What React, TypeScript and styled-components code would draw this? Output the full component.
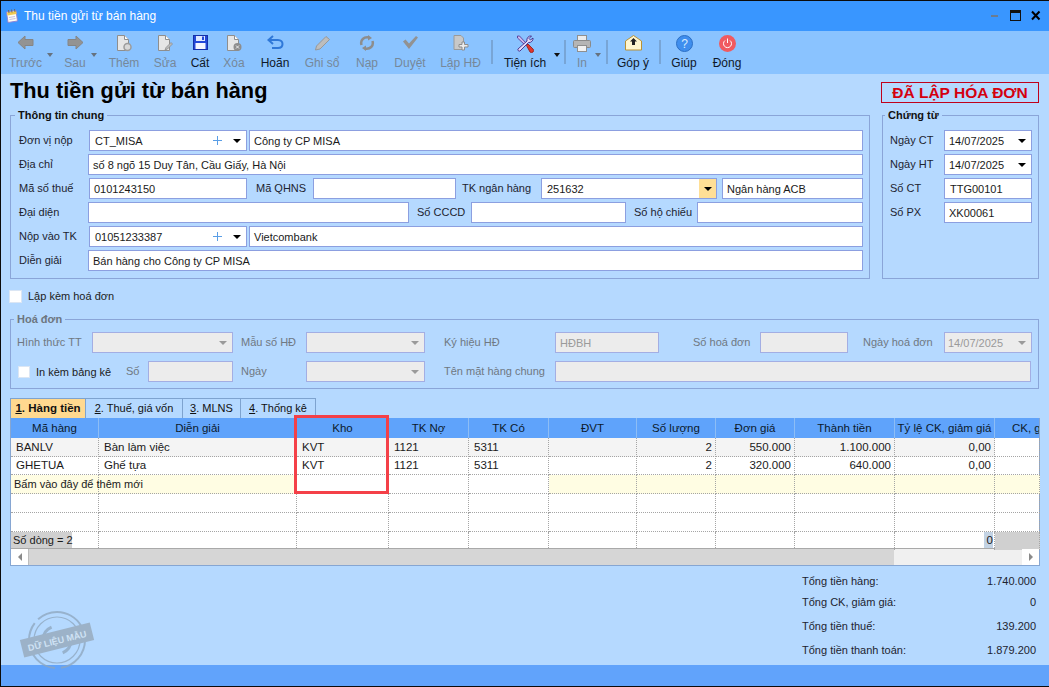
import React from "react";
import styled, { createGlobalStyle } from "styled-components";

const GlobalStyle = createGlobalStyle`
html, body {
  margin: 0;
  padding: 0;
  background: #b5d9ff;
}
* {
  box-sizing: border-box;
}
`;

const Frame = styled.div`
  position: relative;
  width: 1049px;
  height: 687px;
  display: flex;
  flex-direction: column;
  overflow: hidden;
  border: 1px solid #0b0b0b;
  border-right: 0;
  font: 11px "Liberation Sans", Arial, sans-serif;
  color: #1c1c1c;
`;

const TitleBar = styled.div`
  height: 30px;
  flex: none;
  display: flex;
  align-items: center;
  padding: 0 8px 0 4px;
  background: #3996ff;
  color: #fff;
  font-size: 12px;
`;

const TitleText = styled.div`
  margin-left: 5px;
  flex: 1;
`;

const WinControls = styled.div`
  display: flex;
  align-items: center;
  gap: 10px;
  margin-top: -1px;
`;

const Toolbar = styled.div`
  height: 43px;
  flex: none;
  display: flex;
  padding-top: 4px;
  background: #8ac3ff;
  font-size: 12px;
`;

const ToolButton = styled.div<{ $w: number; $off?: boolean }>`
  position: relative;
  width: ${(p) => p.$w}px;
  flex: none;
  display: flex;
  flex-direction: column;
  align-items: center;
  color: ${(p) => (p.$off ? "#76889a" : "#101828")};
`;

const ToolIcon = styled.div`
  height: 18px;
  display: flex;
  justify-content: center;
`;

const ToolLabel = styled.div`
  margin-top: 3px;
  line-height: 14px;
  white-space: nowrap;
`;

const SmallCaret = styled.span<{ $right: number; $off?: boolean }>`
  position: absolute;
  top: 18px;
  right: ${(p) => p.$right}px;
  border-left: 3.5px solid transparent;
  border-right: 3.5px solid transparent;
  border-top: 4px solid ${(p) => (p.$off ? "#66727f" : "#111")};
`;

const ToolSep = styled.div<{ $ml: number }>`
  width: 2px;
  height: 24px;
  margin: 5px 0 0 ${(p) => p.$ml}px;
  flex: none;
  background: #78a5d6;
`;

const Content = styled.div`
  flex: 1;
  min-height: 0;
  padding: 0 0 0 9px;
  background: #b5d9ff;
`;

const HeadRow = styled.div`
  height: 34px;
  display: flex;
  justify-content: space-between;
  width: 1030px;
`;

const Heading = styled.h1`
  margin: 3px 0 0;
  font-size: 21.75px;
  line-height: 28px;
  font-weight: 700;
  color: #000;
`;

const Badge = styled.div`
  width: 158px;
  height: 21px;
  margin: 8px 1px 0 0;
  border: 1px solid #c0001a;
  color: #d4000f;
  font-size: 15.5px;
  font-weight: 700;
  line-height: 19px;
  text-align: center;
  white-space: nowrap;
`;

const GroupRow = styled.div`
  display: flex;
  gap: 12px;
  width: 1030px;
`;

const Group = styled.fieldset<{ $w: number; $h: number; $pt: number; $pl: number }>`
  width: ${(p) => p.$w}px;
  height: ${(p) => p.$h}px;
  margin: 0;
  padding: ${(p) => p.$pt}px 6px 0 ${(p) => p.$pl}px;
  border: 1px solid #8aa5d8;
  min-width: 0;
`;

const GroupTitle = styled.legend<{ $off?: boolean; $ml: number }>`
  margin-left: ${(p) => p.$ml}px;
  padding: 0 3px;
  font-weight: 700;
  line-height: 14px;
  color: ${(p) => (p.$off ? "#6d7680" : "#111")};
`;

const Rows = styled.div<{ $gap: number }>`
  display: flex;
  flex-direction: column;
  gap: ${(p) => p.$gap}px;
`;

const Row = styled.div`
  display: flex;
  height: 21px;
  align-items: stretch;
`;

const Label = styled.div<{ $w: number; $pl?: number; $off?: boolean }>`
  width: ${(p) => p.$w}px;
  flex: none;
  padding-left: ${(p) => p.$pl ?? 0}px;
  line-height: 21px;
  white-space: nowrap;
  color: ${(p) => (p.$off ? "#6f7882" : "#1d2430")};
`;

const Field = styled.div<{ $w?: number; $off?: boolean; $ml?: number; $pl?: number }>`
  ${(p) => (p.$w ? `width: ${p.$w}px; flex: none;` : "flex: 1; min-width: 0;")}
  margin-left: ${(p) => p.$ml ?? 0}px;
  display: flex;
  align-items: center;
  padding-left: ${(p) => p.$pl ?? 4}px;
  border: 1px solid ${(p) => (p.$off ? "#a3aee3" : "#8c9fe0")};
  background: ${(p) => (p.$off ? "#ececec" : "#fff")};
  color: ${(p) => (p.$off ? "#9a9a9a" : "#1a1a1a")};
  white-space: nowrap;
`;

const FieldText = styled.span`
  flex: 1;
`;

const Caret = styled.span<{ $off?: boolean }>`
  width: 0;
  height: 0;
  margin-right: 5px;
  flex: none;
  border-left: 4px solid transparent;
  border-right: 4px solid transparent;
  border-top: 4px solid ${(p) => (p.$off ? "#9a9a9a" : "#000")};
`;

const CaretButton = styled.span`
  align-self: stretch;
  width: 17px;
  display: flex;
  align-items: center;
  justify-content: center;
  background: #ffdf96;
  ${Caret} {
    margin: 0;
  }
`;

const PlusMark = styled.span`
  position: relative;
  width: 9px;
  height: 9px;
  margin-right: 11px;
  flex: none;
  &::before,
  &::after {
    content: "";
    position: absolute;
    background: #5a9ee6;
  }
  &::before {
    left: 4px;
    top: 0;
    width: 1px;
    height: 9px;
  }
  &::after {
    left: 0;
    top: 4px;
    width: 9px;
    height: 1px;
  }
`;

const CheckLine = styled.div`
  height: 14px;
  margin: 10px 0 9px -1px;
  display: flex;
  align-items: center;
  gap: 6px;
  line-height: 14px;
`;

const CheckBox = styled.span<{ $size: number }>`
  width: ${(p) => p.$size}px;
  height: ${(p) => p.$size}px;
  flex: none;
  background: #fff;
  border: 1px solid #dbe6f4;
`;

const InlineCheck = styled.div`
  width: 109px;
  flex: none;
  display: flex;
  align-items: center;
  gap: 6px;
  padding-left: 1px;
  white-space: nowrap;
`;

const Tabs = styled.div`
  height: 20px;
  margin-top: 9px;
  display: flex;
`;

const Tab = styled.div<{ $w: number; $active?: boolean }>`
  width: ${(p) => p.$w}px;
  border: 1px solid #7ea3cf;
  border-left-width: ${(p) => (p.$active ? 1 : 0)}px;
  border-bottom: 0;
  background: ${(p) => (p.$active ? "#ffd98f" : "#b5d9ff")};
  font-weight: ${(p) => (p.$active ? 700 : 400)};
  font-size: ${(p) => (p.$active ? 11.5 : 11)}px;
  color: #111;
  line-height: 18px;
  text-align: center;
  white-space: nowrap;
`;

const Grid = styled.div`
  position: relative;
  width: 1030px;
  border: 1px solid #86a6d2;
  border-top: 0;
  background: #fff;
  font-size: 11.5px;
`;

const GRID_COLUMNS = "88px 198px 92px 80px 80px 88px 79px 79px 100px 100px 45px";

const HeadCells = styled.div`
  display: grid;
  grid-template-columns: ${GRID_COLUMNS};
  height: 20px;
  background: #5fa3fb;
  overflow: hidden;
`;

const HeadCell = styled.div<{ $clip?: boolean }>`
  border-right: 1px solid #8dbdf5;
  line-height: 20px;
  white-space: nowrap;
  overflow: hidden;
  color: #0c1a2c;
  text-align: ${(p) => (p.$clip ? "left" : "center")};
  padding-left: ${(p) => (p.$clip ? 17 : 0)}px;
`;

const BodyRow = styled.div<{ $h: number }>`
  display: grid;
  grid-template-columns: ${GRID_COLUMNS};
  height: ${(p) => p.$h}px;
`;

const Cell = styled.div<{ $bg?: string; $right?: boolean; $foot?: boolean }>`
  padding: 0 ${(p) => (p.$right ? 3 : 4)}px 0 5px;
  border-right: 1px dotted #a5a5a5;
  border-bottom: ${(p) => (p.$foot ? "0" : "1px dotted #a5a5a5")};
  background: ${(p) => p.$bg ?? "transparent"};
  line-height: 18px;
  white-space: nowrap;
  text-align: ${(p) => (p.$right ? "right" : "left")};
  color: #1a1a1a;
`;

const AddHint = styled.span`
  position: relative;
  margin-left: -2px;
  font-size: 11px;
`;

const FootCount = styled.span`
  display: inline-block;
  margin-left: -5px;
  padding-left: 2px;
  width: 61px;
  background: #d0d0d0;
  font-size: 11px;
  line-height: 16px;
  vertical-align: top;
`;

const FootZero = styled.span`
  display: inline-block;
  width: 9px;
  margin-right: -2px;
  background: #c3d3e4;
  line-height: 16px;
  vertical-align: top;
`;

const ScrollBar = styled.div`
  height: 17px;
  display: flex;
  border-top: 1px solid #a9a9a9;
  background: #f0f0f0;
`;

const ScrollBtn = styled.div`
  width: 17px;
  flex: none;
  display: flex;
  align-items: center;
  justify-content: center;
  background: #fff;
`;

const ScrollArrow = styled.span<{ $dir: "left" | "right" }>`
  border-top: 4px solid transparent;
  border-bottom: 4px solid transparent;
  ${(p) => (p.$dir === "left" ? "border-right" : "border-left")}: 4px solid #8a8a8a;
`;

const ScrollThumb = styled.div`
  width: 866px;
  flex: none;
  background: #d6d6d6;
  border-left: 1px solid #bdbdbd;
`;

const ScrollRest = styled.div`
  flex: 1;
`;

const Highlight = styled.div`
  position: absolute;
  left: 283px;
  top: -3px;
  width: 95px;
  height: 79px;
  border: 3px solid #f44048;
  pointer-events: none;
`;

const Totals = styled.div`
  width: 234px;
  margin: 5px 0 0 792px;
`;

const TotalRow = styled.div<{ $mt: number }>`
  height: 20px;
  margin-top: ${(p) => p.$mt}px;
  display: flex;
  justify-content: space-between;
  line-height: 20px;
  color: #1d2430;
`;

const StatusBar = styled.div`
  height: 21px;
  flex: none;
  background: #61a3fb;
`;

const Stamp = styled.svg`
  position: absolute;
  left: 18px;
  top: 607px;
  pointer-events: none;
`;

function WindowIcon() {
  return (
    <svg width="14" height="15" viewBox="0 0 14 15">
      <path d="M1.500 3 L11 1.500 L12.500 12 L3 13.500 Z" fill="#fffdf0" stroke="#8f86d6" />
      <path d="M2 3.500 L11 2 L11.500 5 L2.500 6.500 Z" fill="#f0c850" />
      <path d="M3.500 1 L4 4 M6.500 .5 L7 3.500 M9.500 0 L10 3" stroke="#6a6a6a" />
      <path d="M4 8.500 L10 7.500 M4.500 10.500 L10.500 9.500" stroke="#c2bde6" />
    </svg>
  );
}

function ArrowIcon({ dir }: { dir: "left" | "right" }) {
  const d = dir === "left" ? "M8 1 L1 7.500 L8 14 V10.500 H16 V4.500 H8 Z" : "M9 1 L16 7.500 L9 14 V10.500 H1 V4.500 H9 Z";
  return (
    <svg width="17" height="15" viewBox="0 0 17 15">
      <path d={d} fill="#939393" stroke="#858585" />
    </svg>
  );
}

function DocIcon({ children }: { children?: React.ReactNode }) {
  return (
    <svg width="16" height="17" viewBox="0 0 16 17">
      <path d="M1.500 .5 H8.500 L12.500 4.500 V15.500 H1.500 Z" fill="#e6e6e6" stroke="#8e8e8e" />
      <path d="M8.500 .5 V4.500 H12.500" fill="#fff" stroke="#8e8e8e" />
      {children}
    </svg>
  );
}

function SaveIcon() {
  return (
    <svg width="15" height="15" viewBox="0 0 15 15">
      <rect x=".5" y=".5" width="14" height="14" fill="#2348d8" stroke="#1530a8" />
      <rect x="3" y="1" width="9" height="5" fill="#dfe8ff" />
      <rect x="9" y="1.500" width="2" height="3.500" fill="#2348d8" />
      <rect x="2.500" y="8" width="10" height="6" fill="#f4f6ff" />
    </svg>
  );
}

function UndoIcon() {
  return (
    <svg width="17" height="15" viewBox="0 0 17 15" fill="none">
      <path d="M2 5 H11 C14 5 15.500 7 15.500 9 C15.500 11.500 14 13 11 13 H5" stroke="#2f78d8" strokeWidth="2" />
      <path d="M6 1 L1.500 5 L6 9" stroke="#2f78d8" strokeWidth="2" />
    </svg>
  );
}

function PencilIcon() {
  return (
    <svg width="17" height="16" viewBox="0 0 17 16">
      <path d="M1.500 15 L2.500 11 L12 1.500 L15.500 4.500 L6 14 Z" fill="#bdbdbd" stroke="#989898" />
    </svg>
  );
}

function ReloadIcon() {
  return (
    <svg width="16" height="16" viewBox="0 0 16 16" fill="none" stroke="#8d8d8d" strokeWidth="2.500">
      <path d="M2.500 10 C1 5 5 1.500 10 2.500" />
      <path d="M13.500 6 C15 11 11 14.500 6 13.500" />
      <path d="M9 0 L13 3 L9 5.500 Z M7 16 L3 13 L7 10.500 Z" fill="#8d8d8d" stroke="none" />
    </svg>
  );
}

function CheckIcon() {
  return (
    <svg width="17" height="15" viewBox="0 0 17 15">
      <path d="M1 6.500 L3.500 4.500 L7 8.500 L14 1 L16 2.500 L7 14 Z" fill="#929292" />
    </svg>
  );
}

function InvoiceIcon() {
  return (
    <svg width="16" height="16" viewBox="0 0 16 16">
      <path d="M1 .5 H8 L10.500 3 V14.500 H1 Z" fill="#c8c8c8" stroke="#9a9a9a" />
      <path d="M9 7 H11.500 V9.500 H15 V12 H11.500 V15 H9 V12 H6 V9.500 H9 Z" fill="#ececec" stroke="#8c8c8c" />
    </svg>
  );
}

function ToolsIcon() {
  return (
    <svg width="18" height="18" viewBox="0 0 18 18">
      <path d="M1.500 1 L3.500 1 L10 8 L8.500 9.500 L1.500 3 Z" fill="#cbbcec" stroke="#4b2c8f" strokeWidth=".8" />
      <path d="M15.500 1 A4 4 0 0 0 11 6 L2 14 A1.500 1.500 0 0 0 4 16 L12.500 7.500 A4 4 0 0 0 17 3 L14.500 5 L13 3.500 Z" fill="#e5dcf8" stroke="#3d2786" strokeWidth=".9" />
      <path d="M10.500 10.500 L12 9 L17 14 A2 2 0 0 1 14 17 Z" fill="#e0362c" stroke="#8d1a16" strokeWidth=".8" />
    </svg>
  );
}

function PrinterIcon() {
  return (
    <svg width="18" height="17" viewBox="0 0 18 17">
      <rect x="4.500" y=".5" width="9" height="5" fill="#ececec" stroke="#8f8f8f" />
      <rect x=".5" y="5.500" width="17" height="7" rx="1" fill="#b5b5b5" stroke="#8a8a8a" />
      <rect x="4.500" y="10.500" width="9" height="6" fill="#f1f1f1" stroke="#8f8f8f" />
    </svg>
  );
}

function MailUpIcon() {
  return (
    <svg width="17" height="16" viewBox="0 0 17 16">
      <path d="M.5 6 L8.500 .5 L16.500 6 V15 H.5 Z" fill="#fff6cf" stroke="#b99235" />
      <path d="M8.500 3 L12 6.500 H10 V10 H7 V6.500 H5 Z" fill="#222" />
    </svg>
  );
}

function HelpIcon() {
  return (
    <svg width="17" height="17" viewBox="0 0 17 17">
      <circle cx="8.500" cy="8.500" r="8" fill="#3f8eee" stroke="#2c6fc4" />
      <text x="8.500" y="13" textAnchor="middle" fontSize="12" fill="#d8ecff" fontFamily="Liberation Sans">?</text>
    </svg>
  );
}

function PowerIcon() {
  return (
    <svg width="17" height="17" viewBox="0 0 17 17" fill="none">
      <circle cx="8.500" cy="8.500" r="8.500" fill="#f05a60" />
      <path d="M6 5.500 A4 4 0 1 0 11 5.500" stroke="#fff" />
      <path d="M8.500 3.500 V8" stroke="#fff" />
    </svg>
  );
}

const docBadge = (
  <>
    <circle cx="11.500" cy="12" r="3.500" fill="#d8d8d8" stroke="#9b9b9b" strokeWidth="1.500" />
  </>
);

const docPen = <path d="M8 15 L9 12.500 L14 7.500 L15.500 9 L10.500 14 Z" fill="#bbb" stroke="#888" strokeWidth=".7" />;

const docCross = (
  <>
    <circle cx="11.500" cy="12" r="4" fill="#8d8d8d" />
    <path d="M10 10.500 L13 13.500 M13 10.500 L10 13.500" stroke="#eee" />
  </>
);

function Combo({ text, w }: { text: string; w: number }) {
  return (
    <Field $w={w} $pl={5}>
      <FieldText>{text}</FieldText>
      <PlusMark />
      <Caret />
    </Field>
  );
}

function DateField({ w, off, value }: { w: number; off?: boolean; value?: string }) {
  return (
    <Field $w={w} $off={off} $pl={off ? 3 : 4}>
      <FieldText>{value}</FieldText>
      <Caret $off={off} />
    </Field>
  );
}

const headers = ["Mã hàng", "Diễn giải", "Kho", "TK Nợ", "TK Có", "ĐVT", "Số lượng", "Đơn giá", "Thành tiền", "Tỷ lệ CK, giảm giá"];

const lines = [
  ["BANLV", "Bàn làm việc", "KVT", "1121", "5311", "", "2", "550.000", "1.100.000", "0,00", ""],
  ["GHETUA", "Ghế tựa", "KVT", "1121", "5311", "", "2", "320.000", "640.000", "0,00", ""],
];

const totals = [
  { label: "Tổng tiền hàng:", value: "1.740.000", mt: 0 },
  { label: "Tổng CK, giảm giá:", value: "0", mt: 1 },
  { label: "Tổng tiền thuế:", value: "139.200", mt: 4 },
  { label: "Tổng tiền thanh toán:", value: "1.879.200", mt: 4 },
];

const NEW_ROW_WHITE = [2, 3, 4];
const emptyCells = Array.from({ length: 11 }, (_, i) => i);

export default function App() {
  return (
    <Frame>
      <GlobalStyle />
      <TitleBar>
        <WindowIcon />
        <TitleText>Thu tiền gửi từ bán hàng</TitleText>
        <WinControls>
          <svg width="10" height="11" viewBox="0 0 10 11"><rect x="1" y="5" width="7" height="2" fill="#6b7c90" /></svg>
          <svg width="11" height="11" viewBox="0 0 11 11"><rect x=".5" y=".5" width="10" height="10" fill="none" stroke="#111" /><rect x="0" y="0" width="11" height="3" fill="#111" /></svg>
          <svg width="10" height="11" viewBox="0 0 10 11"><path d="M1 1.500 L8.500 9.500 M8.500 1.500 L1 9.500" stroke="#000" strokeWidth="2" /></svg>
        </WinControls>
      </TitleBar>

      <Toolbar>
        <ToolButton $w={49} $off><ToolIcon><ArrowIcon dir="left" /></ToolIcon><ToolLabel>Trước</ToolLabel><SmallCaret $right={-3} $off /></ToolButton>
        <ToolButton $w={50} $off><ToolIcon><ArrowIcon dir="right" /></ToolIcon><ToolLabel>Sau</ToolLabel><SmallCaret $right={3} $off /></ToolButton>
        <ToolButton $w={48} $off><ToolIcon><DocIcon>{docBadge}</DocIcon></ToolIcon><ToolLabel>Thêm</ToolLabel></ToolButton>
        <ToolButton $w={34} $off><ToolIcon><DocIcon>{docPen}</DocIcon></ToolIcon><ToolLabel>Sửa</ToolLabel></ToolButton>
        <ToolButton $w={36}><ToolIcon><SaveIcon /></ToolIcon><ToolLabel>Cất</ToolLabel></ToolButton>
        <ToolButton $w={32} $off><ToolIcon><DocIcon>{docCross}</DocIcon></ToolIcon><ToolLabel>Xóa</ToolLabel></ToolButton>
        <ToolButton $w={50}><ToolIcon><UndoIcon /></ToolIcon><ToolLabel>Hoãn</ToolLabel></ToolButton>
        <ToolButton $w={44} $off><ToolIcon><PencilIcon /></ToolIcon><ToolLabel>Ghi sổ</ToolLabel></ToolButton>
        <ToolButton $w={46} $off><ToolIcon><ReloadIcon /></ToolIcon><ToolLabel>Nạp</ToolLabel></ToolButton>
        <ToolButton $w={40} $off><ToolIcon><CheckIcon /></ToolIcon><ToolLabel>Duyệt</ToolLabel></ToolButton>
        <ToolButton $w={61} $off><ToolIcon><InvoiceIcon /></ToolIcon><ToolLabel>Lập HĐ</ToolLabel></ToolButton>
        <ToolSep $ml={0} />
        <ToolButton $w={64}><ToolIcon><ToolsIcon /></ToolIcon><ToolLabel>Tiện ích</ToolLabel><SmallCaret $right={-3} /></ToolButton>
        <ToolSep $ml={7} />
        <ToolButton $w={32} $off><ToolIcon><PrinterIcon /></ToolIcon><ToolLabel>In</ToolLabel><SmallCaret $right={-3} $off /></ToolButton>
        <ToolSep $ml={8} />
        <ToolButton $w={50}><ToolIcon><MailUpIcon /></ToolIcon><ToolLabel>Góp ý</ToolLabel></ToolButton>
        <ToolSep $ml={1} />
        <ToolButton $w={46}><ToolIcon><HelpIcon /></ToolIcon><ToolLabel>Giúp</ToolLabel></ToolButton>
        <ToolButton $w={40}><ToolIcon><PowerIcon /></ToolIcon><ToolLabel>Đóng</ToolLabel></ToolButton>
      </Toolbar>

      <Content>
        <HeadRow>
          <Heading>Thu tiền gửi từ bán hàng</Heading>
          <Badge>ĐÃ LẬP HÓA ĐƠN</Badge>
        </HeadRow>

        <GroupRow>
          <Group $w={860} $h={171} $pt={8} $pl={8}>
            <GroupTitle $ml={-4}>Thông tin chung</GroupTitle>
            <Rows $gap={3}>
              <Row>
                <Label $w={70}>Đơn vị nộp</Label>
                <Combo text="CT_MISA" w={158} />
                <Field $ml={2}>Công ty CP MISA</Field>
              </Row>
              <Row>
                <Label $w={69}>Địa chỉ</Label>
                <Field>số 8 ngõ 15 Duy Tân, Cầu Giấy, Hà Nội</Field>
              </Row>
              <Row>
                <Label $w={70}>Mã số thuế</Label>
                <Field $w={158}>0101243150</Field>
                <Label $w={66} $pl={9}>Mã QHNS</Label>
                <Field $w={143} />
                <Label $w={85} $pl={6}>TK ngân hàng</Label>
                <Field $w={176} $pl={5}>
                  <FieldText>251632</FieldText>
                  <CaretButton><Caret /></CaretButton>
                </Field>
                <Field $ml={5}>Ngân hàng ACB</Field>
              </Row>
              <Row>
                <Label $w={69}>Đại diện</Label>
                <Field $w={321} />
                <Label $w={62} $pl={8}>Số CCCD</Label>
                <Field $w={155} />
                <Label $w={71} $pl={8}>Số hộ chiếu</Label>
                <Field />
              </Row>
              <Row>
                <Label $w={70}>Nộp vào TK</Label>
                <Combo text="01051233387" w={158} />
                <Field $ml={2}>Vietcombank</Field>
              </Row>
              <Row>
                <Label $w={69}>Diễn giải</Label>
                <Field>Bán hàng cho Công ty CP MISA</Field>
              </Row>
            </Rows>
          </Group>

          <Group $w={157} $h={171} $pt={8} $pl={7}>
            <GroupTitle $ml={-5}>Chứng từ</GroupTitle>
            <Rows $gap={3}>
              <Row>
                <Label $w={54}>Ngày CT</Label>
                <DateField w={88} value="14/07/2025" />
              </Row>
              <Row>
                <Label $w={54}>Ngày HT</Label>
                <DateField w={88} value="14/07/2025" />
              </Row>
              <Row>
                <Label $w={54}>Số CT</Label>
                <Field $w={88} $pl={5}>TTG00101</Field>
              </Row>
              <Row>
                <Label $w={54}>Số PX</Label>
                <Field $w={88}>XK00061</Field>
              </Row>
            </Rows>
          </Group>
        </GroupRow>

        <CheckLine>
          <CheckBox $size={13} />
          <span>Lập kèm hoá đơn</span>
        </CheckLine>

        <Group $w={1029} $h={77} $pt={6} $pl={6}>
          <GroupTitle $off $ml={-3}>Hoá đơn</GroupTitle>
          <Rows $gap={8}>
            <Row>
              <Label $w={75} $off>Hình thức TT</Label>
              <DateField w={141} off />
              <Label $w={73} $pl={8} $off>Mẫu số HĐ</Label>
              <DateField w={119} off />
              <Label $w={130} $pl={19} $off>Ký hiệu HĐ</Label>
              <Field $w={104} $off>HĐBH</Field>
              <Label $w={101} $pl={34} $off>Số hoá đơn</Label>
              <Field $w={88} $off />
              <Label $w={96} $pl={15} $off>Ngày hoá đơn</Label>
              <DateField w={88} off value="14/07/2025" />
            </Row>
            <Row>
              <InlineCheck>
                <CheckBox $size={12} />
                <span>In kèm bảng kê</span>
              </InlineCheck>
              <Label $w={22} $off>Số</Label>
              <Field $w={85} $off />
              <Label $w={73} $pl={8} $off>Ngày</Label>
              <DateField w={119} off />
              <Label $w={130} $pl={19} $off>Tên mặt hàng chung</Label>
              <Field $w={476} $off />
            </Row>
          </Rows>
        </Group>

        <Tabs>
          <Tab $w={76} $active><u>1</u>. Hàng tiền</Tab>
          <Tab $w={97}><u>2</u>. Thuế, giá vốn</Tab>
          <Tab $w={58}><u>3</u>. MLNS</Tab>
          <Tab $w={75}><u>4</u>. Thống kê</Tab>
        </Tabs>

        <Grid>
          <HeadCells>
            {headers.map((h) => (
              <HeadCell key={h}>{h}</HeadCell>
            ))}
            <HeadCell $clip>CK, giảm giá</HeadCell>
          </HeadCells>

          {lines.map((line, r) => (
            <BodyRow key={line[0]} $h={r === 0 ? 18 : 19}>
              {line.map((value, c) => (
                <Cell key={c} $right={c >= 6} $bg={r === 0 && c < 10 ? "#f4f4f4" : undefined}>
                  {value}
                </Cell>
              ))}
            </BodyRow>
          ))}

          <BodyRow $h={19}>
            {emptyCells.map((c) => (
              <Cell key={c} $bg={NEW_ROW_WHITE.includes(c) ? undefined : "#fffde3"}>
                {c === 0 && <AddHint>Bấm vào đây để thêm mới</AddHint>}
              </Cell>
            ))}
          </BodyRow>
          {[0, 1].map((r) => (
            <BodyRow key={r} $h={19}>
              {emptyCells.map((c) => (
                <Cell key={c} />
              ))}
            </BodyRow>
          ))}
          <BodyRow $h={16}>
            {emptyCells.map((c) => (
              <Cell key={c} $foot $right={c === 9} $bg={c === 10 ? "#d0d0d0" : undefined}>
                {c === 0 && <FootCount>Số dòng = 2</FootCount>}
                {c === 9 && <FootZero>0</FootZero>}
              </Cell>
            ))}
          </BodyRow>

          <ScrollBar>
            <ScrollBtn><ScrollArrow $dir="left" /></ScrollBtn>
            <ScrollThumb />
            <ScrollRest />
            <ScrollBtn><ScrollArrow $dir="right" /></ScrollBtn>
          </ScrollBar>

          <Highlight />
        </Grid>

        <Totals>
          {totals.map((t) => (
            <TotalRow key={t.label} $mt={t.mt}>
              <span>{t.label}</span>
              <span>{t.value}</span>
            </TotalRow>
          ))}
        </Totals>
      </Content>

      <StatusBar />

      <Stamp width="82" height="66" viewBox="0 0 82 66">
        <g fill="none" stroke="#8ea6bd" opacity=".75">
          <circle cx="38" cy="32" r="28" strokeWidth="2" strokeDasharray="40 6 60 5 50 6" />
          <circle cx="38" cy="32" r="23" strokeWidth="1.200" />
          <circle cx="38" cy="32" r="14" strokeWidth="3" strokeDasharray="16 28" />
        </g>
        <g transform="rotate(-14 38 32)">
          <rect x="2" y="23" width="72" height="18" fill="#9cb2c8" />
          <text x="38" y="36" textAnchor="middle" fontSize="9" fontWeight="700" fill="#cfe2f5" fontFamily="Liberation Sans">DỮ LIỆU MẪU</text>
        </g>
      </Stamp>
    </Frame>
  );
}
